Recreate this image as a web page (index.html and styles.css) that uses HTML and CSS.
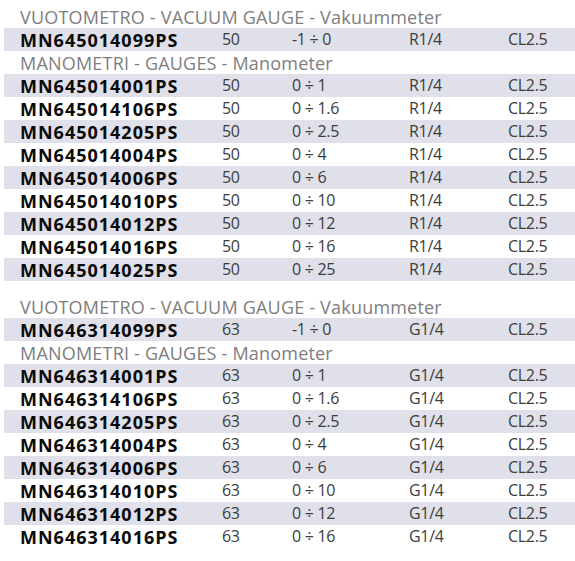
FILE: index.html
```html
<!DOCTYPE html>
<html>
<head>
<meta charset="utf-8">
<link rel="stylesheet" href="styles.css">
</head>
<body>
<div class="sheet">
  <section class="group">
    <div class="title">VUOTOMETRO - VACUUM GAUGE - Vakuummeter</div>
    <div class="row alt"><span class="code">MN645014099PS</span><span>50</span><span>-1 ÷ 0</span><span>R1/4</span><span>CL2.5</span></div>
    <div class="title">MANOMETRI - GAUGES - Manometer</div>
    <div class="row alt"><span class="code">MN645014001PS</span><span>50</span><span>0 ÷ 1</span><span>R1/4</span><span>CL2.5</span></div>
    <div class="row"><span class="code">MN645014106PS</span><span>50</span><span>0 ÷ 1.6</span><span>R1/4</span><span>CL2.5</span></div>
    <div class="row alt"><span class="code">MN645014205PS</span><span>50</span><span>0 ÷ 2.5</span><span>R1/4</span><span>CL2.5</span></div>
    <div class="row"><span class="code">MN645014004PS</span><span>50</span><span>0 ÷ 4</span><span>R1/4</span><span>CL2.5</span></div>
    <div class="row alt"><span class="code">MN645014006PS</span><span>50</span><span>0 ÷ 6</span><span>R1/4</span><span>CL2.5</span></div>
    <div class="row"><span class="code">MN645014010PS</span><span>50</span><span>0 ÷ 10</span><span>R1/4</span><span>CL2.5</span></div>
    <div class="row alt"><span class="code">MN645014012PS</span><span>50</span><span>0 ÷ 12</span><span>R1/4</span><span>CL2.5</span></div>
    <div class="row"><span class="code">MN645014016PS</span><span>50</span><span>0 ÷ 16</span><span>R1/4</span><span>CL2.5</span></div>
    <div class="row alt"><span class="code">MN645014025PS</span><span>50</span><span>0 ÷ 25</span><span>R1/4</span><span>CL2.5</span></div>
  </section>
  <section class="group">
    <div class="title">VUOTOMETRO - VACUUM GAUGE - Vakuummeter</div>
    <div class="row alt"><span class="code">MN646314099PS</span><span>63</span><span>-1 ÷ 0</span><span>G1/4</span><span>CL2.5</span></div>
    <div class="title">MANOMETRI - GAUGES - Manometer</div>
    <div class="row alt"><span class="code">MN646314001PS</span><span>63</span><span>0 ÷ 1</span><span>G1/4</span><span>CL2.5</span></div>
    <div class="row"><span class="code">MN646314106PS</span><span>63</span><span>0 ÷ 1.6</span><span>G1/4</span><span>CL2.5</span></div>
    <div class="row alt"><span class="code">MN646314205PS</span><span>63</span><span>0 ÷ 2.5</span><span>G1/4</span><span>CL2.5</span></div>
    <div class="row"><span class="code">MN646314004PS</span><span>63</span><span>0 ÷ 4</span><span>G1/4</span><span>CL2.5</span></div>
    <div class="row alt"><span class="code">MN646314006PS</span><span>63</span><span>0 ÷ 6</span><span>G1/4</span><span>CL2.5</span></div>
    <div class="row"><span class="code">MN646314010PS</span><span>63</span><span>0 ÷ 10</span><span>G1/4</span><span>CL2.5</span></div>
    <div class="row alt"><span class="code">MN646314012PS</span><span>63</span><span>0 ÷ 12</span><span>G1/4</span><span>CL2.5</span></div>
    <div class="row"><span class="code">MN646314016PS</span><span>63</span><span>0 ÷ 16</span><span>G1/4</span><span>CL2.5</span></div>
  </section>
</div>
</body>
</html>
```
FILE: styles.css
```css
html, body {
  margin: 0;
  padding: 0;
  background: #ffffff;
}
.sheet {
  padding: 5px 0 0 4px;
  font-family: "Open Sans", "Noto Sans", sans-serif;
  display: flex;
  flex-direction: column;
  gap: 14px;
}
.group {
  display: flex;
  flex-direction: column;
}
.title {
  height: 23px;
  box-sizing: border-box;
  padding-top: 2px;
  line-height: 21px;
  padding-left: 16px;
  font-size: 18px;
  letter-spacing: 0.2px;
  color: #7e7e7e;
  white-space: nowrap;
}
.row {
  height: 23px;
  line-height: 23px;
  display: grid;
  grid-template-columns: 202px 70px 117px 99px 1fr;
  padding-left: 16px;
  font-size: 16px;
  letter-spacing: -0.3px;
  color: #3c3c3c;
  white-space: nowrap;
}
.row.alt {
  background: #dfe0ea;
}
.code {
  font-weight: 700;
  font-size: 18px;
  letter-spacing: 1px;
  line-height: 21px;
  padding-top: 2px;
  color: #0a0a0a;
}
```
